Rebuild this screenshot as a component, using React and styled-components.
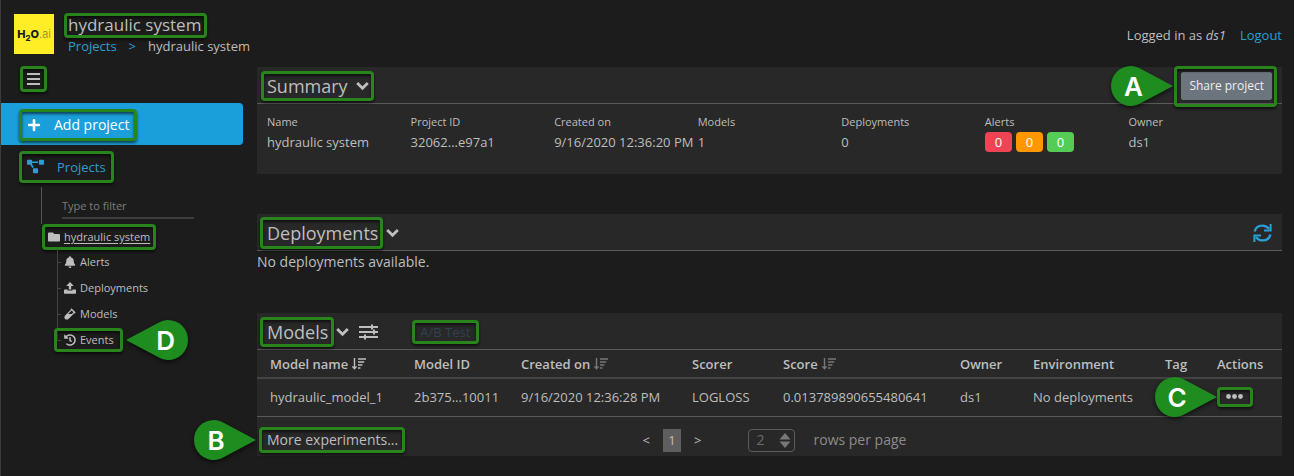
import React from "react";
import styled, { createGlobalStyle, css } from "styled-components";
import {
  FaBell,
  FaFolder,
  FaHistory,
  FaPlus,
  FaProjectDiagram,
  FaVial,
} from "react-icons/fa";

const color = {
  page: "#1c1c1c",
  panel: "#282828",
  text: "#bebebe",
  link: "#2a9fd6",
  green: "#27851c",
  pin: "#1f8c1f",
};

const GlobalStyle = createGlobalStyle`
  *, *::before, *::after { box-sizing: border-box; }
  body {
    margin: 0;
    background: ${color.page};
    color: ${color.text};
    font: 13px/20px "Open Sans", "Noto Sans", sans-serif;
  }
  button, input, select { font: inherit; color: inherit; }
  h1, h2, p { margin: 0; font-weight: 400; }
`;

const Page = styled.div`
  display: flex;
  flex-direction: column;
  min-height: 100vh;
  padding-right: 12px;
  border-left: 1px solid #3c3c3c;
`;

/* Callouts */

const Marked = styled.span`
  position: relative;
  display: inline-flex;
  align-items: center;

  &::after {
    content: "";
    position: absolute;
    inset: ${(p) => p.$inset || "-4px -6px"};
    border: 3px solid ${color.green};
    border-radius: 4px;
    box-shadow: 0 2px 3px rgba(0, 0, 0, 0.6), inset 0 2px 3px rgba(0, 0, 0, 0.6);
    pointer-events: none;
  }
`;

const PinBox = styled.span`
  position: absolute;
  z-index: 2;
  top: 50%;
  width: 62px;
  height: 40px;
  margin-top: -20px;
  ${(p) => (p.$side === "left" ? css`right: calc(100% + ${p.$gap}px);` : css`left: calc(100% + ${p.$gap}px);`)}
  display: flex;
  justify-content: ${(p) => (p.$side === "left" ? "flex-start" : "flex-end")};
  pointer-events: none;

  svg {
    position: absolute;
    inset: 0;
    overflow: visible;
    filter: drop-shadow(0 2px 2px rgba(0, 0, 0, 0.6));
    transform: ${(p) => (p.$side === "left" ? "none" : "scaleX(-1)")};
  }
`;

const PinLetter = styled.b`
  position: relative;
  width: 44px;
  text-align: center;
  font: 600 26px/42px Inter, "Liberation Sans", sans-serif;
  color: #fff;
`;

function Pin({ side = "left", gap, children }) {
  return (
    <PinBox $side={side} $gap={gap}>
      <svg width="62" height="40" viewBox="0 0 62 40" aria-hidden="true">
        <path d="M62 20 L31 3.4 C26 .8 23 0 20 0 A20 20 0 0 0 20 40 C23 40 26 39.2 31 36.6Z" fill={color.pin} />
      </svg>
      <PinLetter>{children}</PinLetter>
    </PinBox>
  );
}

/* Header */

const Header = styled.header`
  display: flex;
  justify-content: space-between;
  height: 67px;
  padding: 14px 0 0 13px;
`;

const Brand = styled.div`
  display: flex;
  gap: 14px;
`;

const Logo = styled.div`
  display: flex;
  align-items: center;
  justify-content: center;
  width: 40px;
  height: 40px;
  background: #ffed25;
  color: #1a1a1a;
  font: 800 11px/12px Inter, sans-serif;

  sub {
    position: relative;
    top: 4px;
    font-size: 8px;
    line-height: 8px;
  }
  span {
    font-weight: 300;
    color: #8a8430;
  }
`;

const Title = styled.h1`
  font-size: 17px;
  line-height: 22px;
`;

const Crumbs = styled.nav`
  display: flex;
  gap: 12px;
  line-height: 20px;
`;

const Link = styled.a`
  color: ${color.link};
  text-decoration: none;
`;

const Account = styled.div`
  display: flex;
  gap: 14px;
  padding-top: 11px;
`;

/* Sidebar */

const Body = styled.div`
  display: grid;
  grid-template-columns: 242px minmax(0, 1fr);
  gap: 14px;
`;

const Sidebar = styled.aside`
  display: flex;
  flex-direction: column;
`;

const PlainButton = styled.button`
  display: inline-flex;
  align-items: center;
  padding: 0;
  border: 0;
  background: none;
  cursor: pointer;
`;

const MenuRow = styled.div`
  display: flex;
  align-items: center;
  height: 36px;
  padding: 0 0 12px 26px;
`;

const NavButton = styled(PlainButton)`
  width: 100%;
  height: 42px;
  padding: 1px 0 0 26px;
  border-radius: 0 4px 4px 0;
  background: ${(p) => (p.$primary ? "#1b9fdb" : "none")};
  color: ${(p) => (p.$primary ? "#fff" : color.link)};
  font-size: ${(p) => (p.$primary ? 14 : 13)}px;
`;

const NavInner = styled(Marked)`
  gap: 13px;
  height: 20px;
`;

const Tree = styled.div`
  margin-left: 40px;
`;

const FilterRow = styled.div`
  height: 37px;
  padding: 6px 0 0 20px;
  border-left: 1px solid #555;
`;

const Filter = styled.input`
  display: block;
  width: 132px;
  height: 26px;
  padding: 0;
  border: 0;
  border-bottom: 2px solid #3e3e3e;
  outline: 0;
  background: none;
  font-size: 11px;

  &::placeholder { color: #7c7c7c; opacity: 1; }
`;

const Current = styled.a`
  display: flex;
  align-items: center;
  height: 25px;
  padding-left: 7px;
  color: inherit;
  font-size: 11px;
  text-decoration: none;

  span { gap: 4px; }
  u { text-underline-offset: 2px; }
`;

const Branch = styled.ul`
  margin: 0 0 0 16px;
  padding: 0;
  list-style: none;
`;

const Leaf = styled.li`
  position: relative;
  display: flex;
  align-items: center;
  height: 26px;
  padding-left: 7px;
  font-size: 11px;

  &::before {
    content: "";
    position: absolute;
    left: 0;
    top: 0;
    height: ${(p) => (p.$last ? "50%" : "100%")};
    border-left: 1px solid #444;
  }
  &::after {
    content: "";
    position: absolute;
    left: 0;
    top: 50%;
    width: 4px;
    border-top: 1px solid #444;
  }
`;

const LeafLink = styled.a`
  display: flex;
  align-items: center;
  gap: 4px;
  color: inherit;
  text-decoration: none;
`;

/* Main column */

const Main = styled.main`
  display: flex;
  flex-direction: column;
`;

const Panel = styled.section`
  min-height: ${(p) => p.$minHeight || 0}px;
  margin-bottom: ${(p) => p.$after || 0}px;
  background: ${(p) => (p.$bare ? "none" : color.panel)};
`;

const PanelHead = styled.div`
  display: flex;
  align-items: center;
  height: 37px;
  padding: 1px 10px 0;
  background: ${color.panel};
  border-bottom: 1px solid #5a5a5a;
`;

const PanelTitle = styled.h2`
  font-size: 18px;
  line-height: 24px;
`;

const Toggle = styled(PlainButton)`
  margin-left: 8px;
`;

const Spacer = styled.span`
  flex: 1;
`;

const ShareButton = styled.button`
  height: 28px;
  padding: 0 7px;
  border: 1px solid #6c757d;
  border-radius: 2px;
  background: #6c757d;
  color: #eee;
  font-size: 12px;
  line-height: 26px;
`;

const Facts = styled.dl`
  display: grid;
  grid-template-columns: repeat(7, minmax(0, 1fr));
  margin: 0;
  padding: 8px 10px 20px;
  white-space: nowrap;

  dt { font-size: 11px; line-height: 20px; }
  dd { display: flex; gap: 4px; margin: 0; line-height: 20px; }
`;

const Badge = styled.span`
  width: 27px;
  border-radius: 4px;
  background: ${(p) => p.$tone};
  color: #fff;
  text-align: center;
`;

const Empty = styled.p`
  font-size: 14px;
  line-height: 22px;
`;

const IconButton = styled(PlainButton)`
  color: ${(p) => (p.$link ? color.link : color.text)};
  margin-left: ${(p) => p.$before || 0}px;
`;

const TestSlot = styled.span`
  margin-left: 42px;
`;

const TestButton = styled(PlainButton)`
  color: #2c4350;
`;

const Table = styled.table`
  width: 100%;
  table-layout: fixed;
  border-collapse: separate;
  border-spacing: 0;
  white-space: nowrap;

  th, td {
    padding: 0 0 0 13px;
    text-align: left;
    border-bottom: 1px solid #5a5a5a;
  }
  th { height: 29px; font-weight: 600; border-bottom: 2px solid #444; }
  td { height: 38px; padding-bottom: 2px; }
`;

const SortHead = styled.span`
  display: inline-flex;
  align-items: center;
  gap: 4px;
  svg { color: ${(p) => (p.$active ? color.text : "#777")}; }
`;

const ActionCell = styled.div`
  display: flex;
  padding-left: 9px;
`;

const Footer = styled.div`
  display: grid;
  grid-template-columns: 1fr auto 1fr;
  align-items: center;
  height: 39px;
  padding: 7px 0 0 10px;
`;

const MoreButton = styled(PlainButton)`
  font-size: 14px;
`;

const Pager = styled.div`
  display: flex;
  align-items: center;
  gap: 13px;
`;

const PageNumber = styled(PlainButton)`
  justify-content: center;
  width: 18px;
  height: 23px;
  background: #5e5e5e;
`;

const RowsLabel = styled.label`
  display: flex;
  align-items: center;
  gap: 18px;
  margin-left: 34px;
  color: #8c8c8c;
  font-size: 14px;
`;

const SelectBox = styled.span`
  position: relative;
  display: flex;

  svg { position: absolute; right: 4px; top: 4px; pointer-events: none; }
`;

const Select = styled.select`
  appearance: none;
  width: 47px;
  height: 23px;
  padding: 0 0 0 7px;
  border: 1px solid #5c5c5c;
  border-radius: 4px;
  background: none;
  color: #6c6c6c;
`;

/* Icons */

const BarsIcon = () => (
  <svg width="13" height="12" viewBox="0 0 13 12" fill="currentColor" aria-hidden="true">
    <path d="M0 0h13v2H0zM0 5h13v2H0zM0 10h13v2H0z" />
  </svg>
);

const ChevronIcon = () => (
  <svg width="13" height="10" viewBox="0 0 13 10" fill="none" stroke="currentColor" strokeWidth="2.8" aria-hidden="true">
    <path d="M1.2 2 L6.5 7.2 L11.8 2" />
  </svg>
);

const UploadIcon = () => (
  <svg width="12" height="12" viewBox="0 0 12 12" fill="currentColor" aria-hidden="true">
    <path d="M6 0 L9.8 4 H7.2 V7.6 H4.8 V4 H2.2Z" />
    <path d="M.6 7.4h3V8.6h4.8V7.4h3a.6.6 0 0 1 .6.6v3a.8.8 0 0 1-.8.8H.8A.8.8 0 0 1 0 11V8a.6.6 0 0 1 .6-.6z" />
  </svg>
);

const TuneIcon = () => (
  <svg width="19" height="16" viewBox="0 0 19 16" stroke="currentColor" strokeWidth="2" aria-hidden="true">
    <path d="M0 3h19M0 8h19M0 13h19" />
    <path d="M13 .5v5M15 5.5v5M6 10.5v5" />
  </svg>
);

const RefreshIcon = () => (
  <svg width="19" height="18" viewBox="0 0 19 18" fill="none" stroke="currentColor" strokeWidth="2.4" aria-hidden="true">
    <path d="M1.6 7.6 C2.4 4 5.5 1.6 9.4 1.6 C12 1.6 14.2 2.7 16 4.8" />
    <path d="M17.6 0 V6.6 H11" strokeWidth="2" />
    <path d="M17.4 10.4 C16.6 14 13.5 16.4 9.6 16.4 C7 16.4 4.8 15.3 3 13.2" />
    <path d="M1.4 18 V11.4 H8" strokeWidth="2" />
  </svg>
);

const SortIcon = () => (
  <svg width="14" height="12" viewBox="0 0 14 12" fill="none" stroke="currentColor" aria-hidden="true">
    <path d="M2.5 0v10.5M.4 8.4l2.1 2.4 2.1-2.4" strokeWidth="1.4" />
    <path d="M6 1h8M6 4h6.2M6 7h4.4M6 10h2.4" strokeWidth="1.6" />
  </svg>
);

const DotsIcon = () => (
  <svg width="17" height="5" viewBox="0 0 17 5" fill="currentColor" aria-hidden="true">
    <circle cx="2.5" cy="2.5" r="2.4" />
    <circle cx="8.5" cy="2.5" r="2.4" />
    <circle cx="14.5" cy="2.5" r="2.4" />
  </svg>
);

const StepIcon = () => (
  <svg width="12" height="15" viewBox="0 0 12 15" fill="#777" aria-hidden="true">
    <path d="M6 0l5.5 6.5H.5zM6 15L.5 8.5h11z" />
  </svg>
);

const leaves = [
  { name: "Alerts", icon: <FaBell size={12} /> },
  { name: "Deployments", icon: <UploadIcon /> },
  { name: "Models", icon: <FaVial size={12} /> },
  { name: "Events", icon: <FaHistory size={12} />, pin: "D" },
];

const facts = [
  ["Name", "hydraulic system"],
  ["Project ID", "32062...e97a1"],
  ["Created on", "9/16/2020 12:36:20 PM"],
  ["Models", "1"],
  ["Deployments", "0"],
  [
    "Alerts",
    ["#ee4455", "#ff9800", "#55cc55"].map((tone) => (
      <Badge key={tone} $tone={tone}>0</Badge>
    )),
  ],
  ["Owner", "ds1"],
];

const columns = [
  { name: "Model name", width: 144, sort: true, active: true },
  { name: "Model ID", width: 107 },
  { name: "Created on", width: 171, sort: true },
  { name: "Scorer", width: 91 },
  { name: "Score", width: 177, sort: true },
  { name: "Owner", width: 73 },
  { name: "Environment", width: 132 },
  { name: "Tag", width: 52 },
  { name: "Actions", width: 78 },
];

export default function App() {
  return (
    <Page>
      <GlobalStyle />
      <Header>
        <Brand>
          <Logo>H<sub>2</sub>O<span>.ai</span></Logo>
          <div>
            <Title><Marked $inset="-1px -6px -2px -4px">hydraulic system</Marked></Title>
            <Crumbs aria-label="Breadcrumb">
              <Link href="#projects">Projects</Link>
              <Link as="span">&gt;</Link>
              <span>hydraulic system</span>
            </Crumbs>
          </div>
        </Brand>
        <Account>
          <span>Logged in as <i>ds1</i></span>
          <Link href="#logout">Logout</Link>
        </Account>
      </Header>

      <Body>
        <Sidebar>
          <MenuRow>
            <Marked $inset="-7px">
              <PlainButton aria-label="Toggle menu"><BarsIcon /></PlainButton>
            </Marked>
          </MenuRow>
          <NavButton $primary>
            <NavInner $inset="-6px -8px"><FaPlus size={14} />Add project</NavInner>
          </NavButton>
          <NavButton>
            <NavInner $inset="-6px -8px"><FaProjectDiagram size={17} />Projects</NavInner>
          </NavButton>
          <Tree>
            <FilterRow><Filter aria-label="Type to filter" placeholder="Type to filter" /></FilterRow>
            <Current href="#hydraulic-system">
              <Marked $inset="-3px -6px">
                <FaFolder size={12} /><u>hydraulic system</u>
              </Marked>
            </Current>
            <Branch>
              {leaves.map(({ name, icon, pin }) => {
                const link = <LeafLink href={`#${name.toLowerCase()}`}>{icon}{name}</LeafLink>;
                return (
                  <Leaf key={name} $last={!!pin}>
                    {pin ? (
                      <Marked $inset="-2px -9px -2px -10px">
                        {link}
                        <Pin side="right" gap={12}>{pin}</Pin>
                      </Marked>
                    ) : link}
                  </Leaf>
                );
              })}
            </Branch>
          </Tree>
        </Sidebar>

        <Main>
          <Panel $minHeight={107} $after={40}>
            <PanelHead>
              <Marked $inset="-3px -5px -3px -6px">
                <PanelTitle>Summary</PanelTitle>
                <Toggle aria-label="Collapse summary"><ChevronIcon /></Toggle>
              </Marked>
              <Spacer />
              <Marked $inset="-6px -5px -7px -7px">
                <ShareButton>Share project</ShareButton>
                <Pin gap={8}>A</Pin>
              </Marked>
            </PanelHead>
            <Facts>
              {facts.map(([label, value]) => (
                <div key={label}><dt>{label}</dt><dd>{value}</dd></div>
              ))}
            </Facts>
          </Panel>

          <Panel $bare $minHeight={59} $after={40}>
            <PanelHead>
              <Marked $inset="-4px -5px -4px -7px"><PanelTitle>Deployments</PanelTitle></Marked>
              <Toggle aria-label="Collapse deployments"><ChevronIcon /></Toggle>
              <Spacer />
              <IconButton $link aria-label="Refresh deployments"><RefreshIcon /></IconButton>
            </PanelHead>
            <Empty>No deployments available.</Empty>
          </Panel>

          <Panel>
            <PanelHead>
              <Marked $inset="-3px -6px -3px -7px"><PanelTitle>Models</PanelTitle></Marked>
              <Toggle aria-label="Collapse models"><ChevronIcon /></Toggle>
              <IconButton $before={10} aria-label="Model table settings"><TuneIcon /></IconButton>
              <TestSlot>
                <Marked $inset="-2px -9px -2px -8px"><TestButton disabled>A/B Test</TestButton></Marked>
              </TestSlot>
            </PanelHead>
            <Table>
              <colgroup>
                {columns.map((c) => <col key={c.name} width={c.width} />)}
              </colgroup>
              <thead>
                <tr>
                  {columns.map((c) => (
                    <th key={c.name} scope="col">
                      {c.sort ? <SortHead $active={c.active}>{c.name}<SortIcon /></SortHead> : c.name}
                    </th>
                  ))}
                </tr>
              </thead>
              <tbody>
                <tr>
                  <td>hydraulic_model_1</td>
                  <td>2b375...10011</td>
                  <td>9/16/2020 12:36:28 PM</td>
                  <td>LOGLOSS</td>
                  <td>0.013789890655480641</td>
                  <td>ds1</td>
                  <td>No deployments</td>
                  <td />
                  <td>
                    <ActionCell>
                      <Marked $inset="-7px -10px -8px -9px">
                        <PlainButton aria-label="Model actions"><DotsIcon /></PlainButton>
                        <Pin gap={9}>C</Pin>
                      </Marked>
                    </ActionCell>
                  </td>
                </tr>
              </tbody>
            </Table>
            <Footer>
              <div>
                <Marked $inset="-3px -7px -3px -8px">
                  <MoreButton>More experiments...</MoreButton>
                  <Pin gap={11}>B</Pin>
                </Marked>
              </div>
              <Pager>
                <PlainButton aria-label="Previous page">&lt;</PlainButton>
                <PageNumber>1</PageNumber>
                <PlainButton aria-label="Next page">&gt;</PlainButton>
                <RowsLabel>
                  <SelectBox>
                    <Select defaultValue="2"><option>2</option><option>5</option><option>10</option></Select>
                    <StepIcon />
                  </SelectBox>
                  rows per page
                </RowsLabel>
              </Pager>
            </Footer>
          </Panel>
        </Main>
      </Body>
    </Page>
  );
}
